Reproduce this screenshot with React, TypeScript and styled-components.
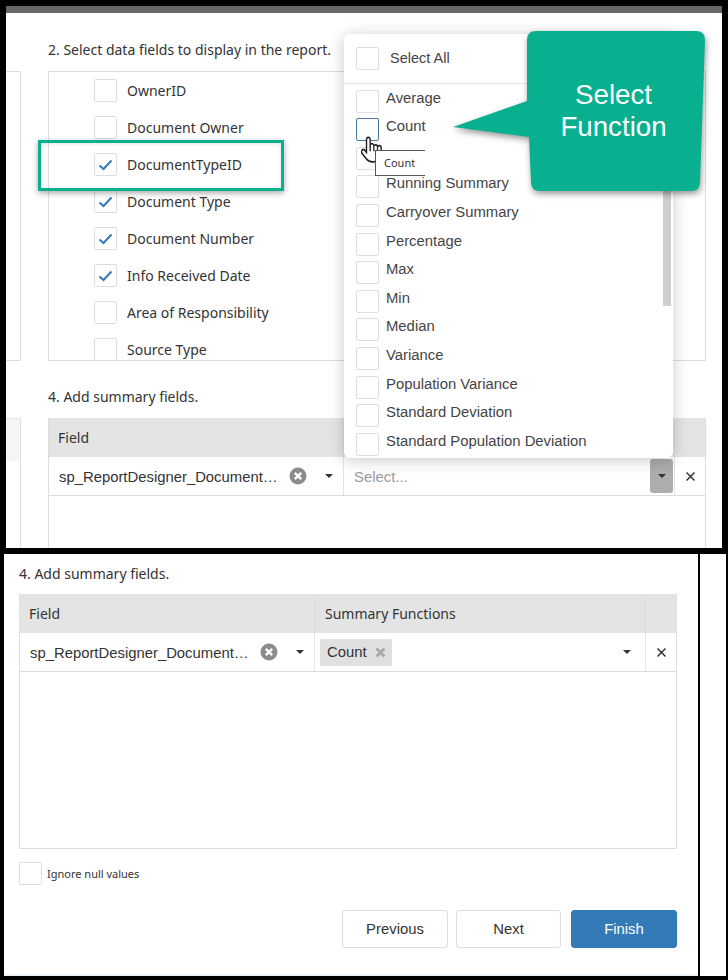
import React from "react";
import styled, { createGlobalStyle } from "styled-components";

const Global = createGlobalStyle`
  html, body { margin: 0; padding: 0; background: #000; }
  * { box-sizing: border-box; }
  body { font-family: "Noto Sans", "Liberation Sans", sans-serif; font-size: 14px; color: #333; }
`;

const Page = styled.div`
  width: 728px;
  height: 980px;
  background: #000;
  overflow: hidden;
  display: flex;
  flex-direction: column;
  gap: 6px;
  padding-top: 6px;
`;

const TopPanel = styled.section`
  position: relative;
  margin-left: 6px;
  width: 716px;
  height: 542px;
  background: #fff;
  overflow: hidden;
`;

const TopBar = styled.div`
  height: 7px;
  background: #666;
`;

const TopGrid = styled.div`
  display: grid;
  grid-template-columns: 15px 658px;
  column-gap: 27px;
  padding-top: 27px;
`;

const Heading = styled.div`
  height: 20px;
  line-height: 20px;
  font-size: 14px;
  margin-bottom: 11px;
  white-space: nowrap;
  color: #333;
`;

const LowerHeading = styled(Heading)`
  margin-bottom: 10px;
`;

const StubColumn = styled.div`
  padding-top: 31px;
`;

const StubList = styled.div`
  height: 290px;
  border: 1px solid #ddd;
  border-left: none;
`;

const StubTable = styled.div`
  margin-top: 57px;
  height: 200px;
  border-top: 1px solid #e4e4e4;
  border-right: 1px solid #ddd;
`;

const StubHead = styled.div`
  height: 42px;
  background: #f5f5f5;
`;

const FieldList = styled.div`
  height: 290px;
  border: 1px solid #ddd;
  overflow: hidden;
  margin-bottom: 26px;
`;

const FieldRow = styled.div`
  display: flex;
  align-items: center;
  gap: 10px;
  height: 37px;
  padding-left: 45px;
  font-size: 14px;
`;

const Box = styled.span<{ $active?: boolean }>`
  flex: none;
  display: inline-flex;
  align-items: center;
  justify-content: center;
  width: 23px;
  height: 23px;
  background: #fff;
  border: 1px solid ${(p) => (p.$active ? "#4a76a0" : "#ddd")};
  border-radius: 2px;
`;

const CheckMark = () => (
  <svg width="15" height="12" viewBox="0 0 15 12">
    <path d="M1.5 6.5 L5.5 10 L13.5 1.5" fill="none" stroke="#337ab7" strokeWidth="2" />
  </svg>
);

const Table = styled.div<{ $height: number; $closed?: boolean }>`
  display: flex;
  flex-direction: column;
  height: ${(p) => p.$height}px;
  width: 658px;
  border: 1px solid #ddd;
  border-top: none;
  border-bottom: ${(p) => (p.$closed ? "1px solid #ddd" : "none")};
  overflow: hidden;
`;

const HeadRow = styled.div`
  display: grid;
  grid-template-columns: 296px 331px 1fr;
  height: 39px;
  margin: 0 -1px;
  background: #e4e4e4;
`;

const HeadCell = styled.div`
  display: flex;
  align-items: center;
  padding-left: 10px;
  border-right: 1px solid #dcdcdc;
  font-size: 14px;
  &:last-child { border-right: none; }
`;

const BodyRow = styled.div`
  display: grid;
  grid-template-columns: 295px 331px 1fr;
  height: 39px;
  border-bottom: 1px solid #ddd;
`;

const Cell = styled.div`
  display: flex;
  align-items: center;
  min-width: 0;
  font-family: "Liberation Sans", sans-serif;
  font-size: 14.85px;
  border-right: 1px solid #e4e4e4;
  &:last-child { border-right: none; justify-content: center; }
`;

const FieldCell = styled(Cell)`
  padding-left: 10px;
`;

const FieldName = styled.span`
  width: 221px;
  padding-top: 2px;
  white-space: nowrap;
`;

const ClearCircle = styled.span`
  flex: none;
  margin-left: 9px;
  display: inline-flex;
`;

const Caret = styled.span`
  flex: none;
  width: 0;
  height: 0;
  border-left: 4px solid transparent;
  border-right: 4px solid transparent;
  border-top: 4px solid #333;
`;

const FieldCaret = styled(Caret)`
  margin-left: 18px;
`;

const FuncCell = styled(Cell)`
  justify-content: space-between;
  padding: 0 14px 0 5px;
`;

const Placeholder = styled.span`
  color: #999;
  margin-left: 5px;
  padding-top: 2px;
`;

const OpenCaretButton = styled.span`
  display: flex;
  align-items: center;
  justify-content: center;
  width: 23px;
  height: 34px;
  margin-right: -13px;
  background: #adadad;
  border-radius: 3px;
`;

const Chip = styled.span`
  display: inline-flex;
  align-items: center;
  height: 27px;
  width: 72px;
  padding-left: 7px;
  gap: 8px;
  background: #e0e0e0;
  border-radius: 2px;
`;

const ClearCircleIcon = () => (
  <svg width="18" height="18" viewBox="0 0 18 18">
    <circle cx="9" cy="9" r="8.5" fill="#8c8c8c" />
    <path d="M5.8 5.8 L12.2 12.2 M12.2 5.8 L5.8 12.2" stroke="#fff" strokeWidth="2.4" />
  </svg>
);

const SmallX = ({ color, w }: { color: string; w: number }) => (
  <svg width="11" height="11" viewBox="0 0 11 11">
    <path d="M1.5 1.5 L9.5 9.5 M9.5 1.5 L1.5 9.5" stroke={color} strokeWidth={w} />
  </svg>
);

const SummaryTable = ({ height, closed, open }: { height: number; closed?: boolean; open?: boolean }) => (
  <Table $height={height} $closed={closed}>
    <HeadRow>
      <HeadCell>Field</HeadCell>
      <HeadCell>Summary Functions</HeadCell>
      <HeadCell />
    </HeadRow>
    <BodyRow>
      <FieldCell>
        <FieldName>sp_ReportDesigner_Document…</FieldName>
        <ClearCircle><ClearCircleIcon /></ClearCircle>
        <FieldCaret />
      </FieldCell>
      <FuncCell>
        {open ? (
          <>
            <Placeholder>Select...</Placeholder>
            <OpenCaretButton><Caret /></OpenCaretButton>
          </>
        ) : (
          <>
            <Chip>Count <SmallX color="#aaa" w={2.8} /></Chip>
            <Caret />
          </>
        )}
      </FuncCell>
      <Cell><SmallX color="#333" w={1.5} /></Cell>
    </BodyRow>
  </Table>
);

const Dropdown = styled.div`
  position: absolute;
  left: 338px;
  top: 28px;
  width: 329px;
  height: 424px;
  background: #fff;
  border-radius: 6px;
  box-shadow: 0 2px 16px rgba(0, 0, 0, 0.22);
  overflow: hidden;
  font-family: "Liberation Sans", sans-serif;
  font-size: 14.85px;
  color: #444;
`;

const SelectAllRow = styled.div`
  display: flex;
  align-items: center;
  gap: 11px;
  height: 50px;
  padding: 0 12px 1px;
  font-size: 14.5px;
  border-bottom: 1px solid #e4e4e4;
`;

const OptionList = styled.div`
  position: relative;
  padding-top: 5.7px;
`;

const OptionRow = styled.div`
  display: flex;
  align-items: flex-start;
  gap: 7px;
  height: 28.6px;
  padding-left: 12px;
  line-height: 17px;
`;

const Scrollbar = styled.div`
  position: absolute;
  left: 319px;
  top: 0;
  width: 8px;
  height: 222px;
  background: #cdcdcd;
`;

const Tooltip = styled.div`
  position: absolute;
  left: 369px;
  top: 144px;
  width: 50px;
  height: 26px;
  padding-left: 8px;
  line-height: 24px;
  font-size: 11px;
  font-family: "Noto Sans", sans-serif;
  background: #fff;
  border: 1px solid #555;
  border-right: none;
`;

const HandCursor = styled.svg`
  position: absolute;
  left: 355px;
  top: 129px;
`;

const Highlight = styled.div`
  position: absolute;
  left: 32px;
  top: 134px;
  width: 246px;
  height: 51px;
  border: 3px solid #0ab08f;
  box-shadow: 0 2px 6px rgba(0, 0, 0, 0.35), inset 0 1px 4px rgba(0, 0, 0, 0.12);
`;

const CalloutShape = styled.svg`
  position: absolute;
  left: 440px;
  top: 18px;
  filter: drop-shadow(1px 3px 3px rgba(0, 0, 0, 0.4));
`;

const CalloutText = styled.div`
  position: absolute;
  left: 521px;
  top: 73px;
  width: 173px;
  text-align: center;
  font-family: "Liberation Sans", sans-serif;
  font-size: 27.7px;
  line-height: 32px;
  color: #fff;
`;

const LowerWrap = styled.div`
  display: flex;
  gap: 2px;
  margin-left: 4px;
  height: 422px;
`;

const LowerPanel = styled.section`
  width: 694px;
  padding: 10px 0 0 15px;
  background: #fff;
  border-bottom: 2px solid #eef3f7;
`;

const SidePiece = styled.div`
  width: 26px;
  background: #fff;
`;

const NullRow = styled.div`
  display: flex;
  align-items: center;
  gap: 5px;
  margin-top: 13px;
  font-family: "Noto Sans", sans-serif;
  font-size: 11px;
`;

const Footer = styled.div`
  display: flex;
  justify-content: flex-end;
  gap: 8px;
  width: 658px;
  margin-top: 25px;
`;

const Button = styled.button<{ $primary?: boolean }>`
  width: 106px;
  height: 38px;
  font-family: "Liberation Sans", sans-serif;
  font-size: 14.85px;
  color: ${(p) => (p.$primary ? "#fff" : "#333")};
  background: ${(p) => (p.$primary ? "#337ab7" : "#fff")};
  border: 1px solid ${(p) => (p.$primary ? "#337ab7" : "#ddd")};
  border-radius: 3px;
  margin-left: ${(p) => (p.$primary ? "2px" : "0")};
`;

const NextButton = styled(Button)`
  width: 105px;
`;

const fields: [string, boolean][] = [
  ["OwnerID", false],
  ["Document Owner", false],
  ["DocumentTypeID", true],
  ["Document Type", true],
  ["Document Number", true],
  ["Info Received Date", true],
  ["Area of Responsibility", false],
  ["Source Type", false],
];

const options = [
  "Average", "Count", "Sum", "Running Summary", "Carryover Summary", "Percentage", "Max", "Min",
  "Median", "Variance", "Population Variance", "Standard Deviation", "Standard Population Deviation",
];

export default function App() {
  return (
    <Page>
      <Global />
      <TopPanel>
        <TopBar />
        <TopGrid>
          <StubColumn>
            <StubList />
            <StubTable><StubHead /></StubTable>
          </StubColumn>
          <div>
            <Heading>2. Select data fields to display in the report.</Heading>
            <FieldList>
              {fields.map(([name, checked]) => (
                <FieldRow key={name}>
                  <Box>{checked && <CheckMark />}</Box>
                  {name}
                </FieldRow>
              ))}
            </FieldList>
            <Heading>4. Add summary fields.</Heading>
            <SummaryTable height={130} open />
          </div>
        </TopGrid>

        <Highlight />

        <Dropdown>
          <SelectAllRow>
            <Box />
            Select All
          </SelectAllRow>
          <OptionList>
            {options.map((o) => (
              <OptionRow key={o}>
                <Box $active={o === "Count"} />
                <span>{o}</span>
              </OptionRow>
            ))}
            <Scrollbar />
          </OptionList>
        </Dropdown>

        <HandCursor width="22" height="28" viewBox="0 0 24 24" preserveAspectRatio="none">
          <path
            d="M10 14 V4a2 2 0 0 0-4 0v11l-2.2-2.2a2 2 0 0 0-2.8 2.8l4.6 4.7C7 21.7 9 23 12 23h2a8 8 0 0 0 8-8v-4a2 2 0 0 0-4 0 2 2 0 0 0-4-1 2 2 0 0 0-4-1"
            fill="#fff"
            stroke="#222"
            strokeWidth="1.5"
          />
          <path d="M14 10v4M18 11v4" stroke="#222" strokeWidth="1.4" fill="none" />
        </HandCursor>
        <Tooltip>Count</Tooltip>

        <CalloutShape width="272" height="180" viewBox="0 0 272 180">
          <path
            d="M81 16 Q81 7 90 7 H250 Q259 7 259 16 L254 158 Q254 167 245 167 H94 Q85 167 85 158 L83 113 L7 103 L81 77 Z"
            fill="#09b08f"
          />
        </CalloutShape>
        <CalloutText>Select<br />Function</CalloutText>
      </TopPanel>

      <LowerWrap>
        <LowerPanel>
          <LowerHeading>4. Add summary fields.</LowerHeading>
          <SummaryTable height={255} closed />
          <NullRow>
            <Box />
            Ignore null values
          </NullRow>
          <Footer>
            <Button>Previous</Button>
            <NextButton>Next</NextButton>
            <Button $primary>Finish</Button>
          </Footer>
        </LowerPanel>
        <SidePiece />
      </LowerWrap>
    </Page>
  );
}
